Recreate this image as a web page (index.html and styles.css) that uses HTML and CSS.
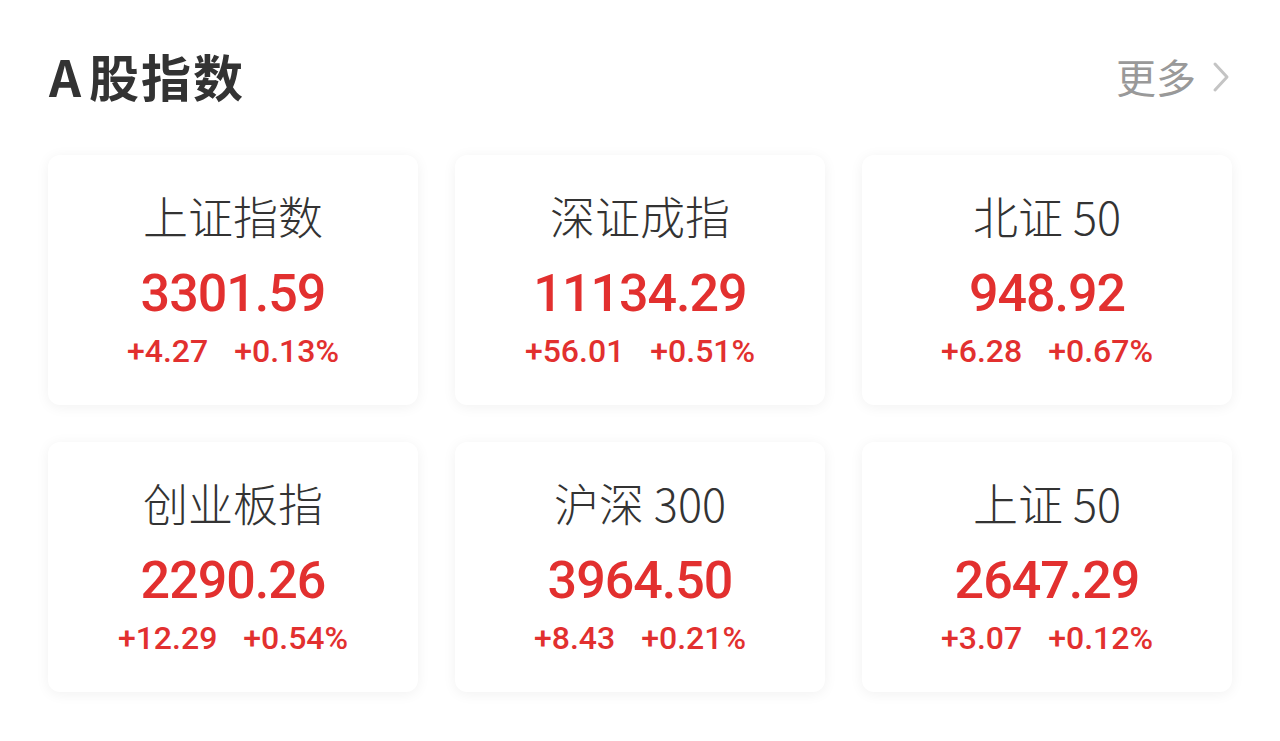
FILE: index.html
```html
<!DOCTYPE html>
<html lang="zh">
<head>
<meta charset="utf-8">
<link rel="stylesheet" href="styles.css">
</head>
<body>
<div class="page">
  <div class="header">
    <div class="title"><span class="latin">A</span>股指数</div>
    <div class="more">更多<svg class="chev" width="20" height="32" viewBox="0 0 20 32"><polyline points="4,3 16,16 4,29" fill="none" stroke="#c4c4c4" stroke-width="3" stroke-linecap="round" stroke-linejoin="round"/></svg></div>
  </div>
  <div class="grid">
    <div class="card"><div class="name">上证指数</div><div class="price">3301.59</div><div class="chg"><span>+4.27</span><span>+0.13%</span></div></div>
    <div class="card"><div class="name">深证成指</div><div class="price">11134.29</div><div class="chg"><span>+56.01</span><span>+0.51%</span></div></div>
    <div class="card"><div class="name">北证 50</div><div class="price">948.92</div><div class="chg"><span>+6.28</span><span>+0.67%</span></div></div>
    <div class="card"><div class="name">创业板指</div><div class="price">2290.26</div><div class="chg"><span>+12.29</span><span>+0.54%</span></div></div>
    <div class="card"><div class="name">沪深 300</div><div class="price">3964.50</div><div class="chg"><span>+8.43</span><span>+0.21%</span></div></div>
    <div class="card"><div class="name">上证 50</div><div class="price">2647.29</div><div class="chg"><span>+3.07</span><span>+0.12%</span></div></div>
  </div>
</div>
</body>
</html>
```
FILE: styles.css
```css
* { box-sizing: border-box; }
html, body { margin: 0; padding: 0; background: #ffffff; }
body { font-family: "Noto Sans CJK SC", "Noto Sans", sans-serif; }
.page { width: 1280px; height: 741px; padding: 46px 49px 0 48px; }
.header { display: flex; justify-content: space-between; align-items: center; height: 58px; margin-bottom: 51px; }
.title { font-size: 50px; font-weight: 700; color: #333333; line-height: 58px; padding-left: 1px; letter-spacing: 2px; }
.latin { margin-right: 6px; }
.more { display: flex; align-items: center; gap: 15px; font-size: 40px; color: #999999; line-height: 58px; padding-top: 2px; }
.chev { display: block; margin-top: 2px; }
.grid { display: grid; grid-template-columns: repeat(3, 370px); column-gap: 37px; row-gap: 37px; }
.card { height: 250px; background: #ffffff; border-radius: 12px; box-shadow: 0 2px 14px rgba(0, 0, 0, 0.06); display: flex; flex-direction: column; align-items: center; padding-top: 35px; }
.name { font-size: 45px; color: #333333; line-height: 52px; font-weight: 300; }
.price { font-family: Roboto, "Noto Sans", sans-serif; font-size: 52px; font-weight: 500; letter-spacing: -1px; color: #e2302f; line-height: 60px; margin-top: 22px; }
.chg { display: flex; gap: 26px; font-family: Roboto, "Noto Sans", sans-serif; font-size: 32px; font-weight: 500; letter-spacing: 0; color: #e2302f; line-height: 40px; margin-top: 7px; }
```
